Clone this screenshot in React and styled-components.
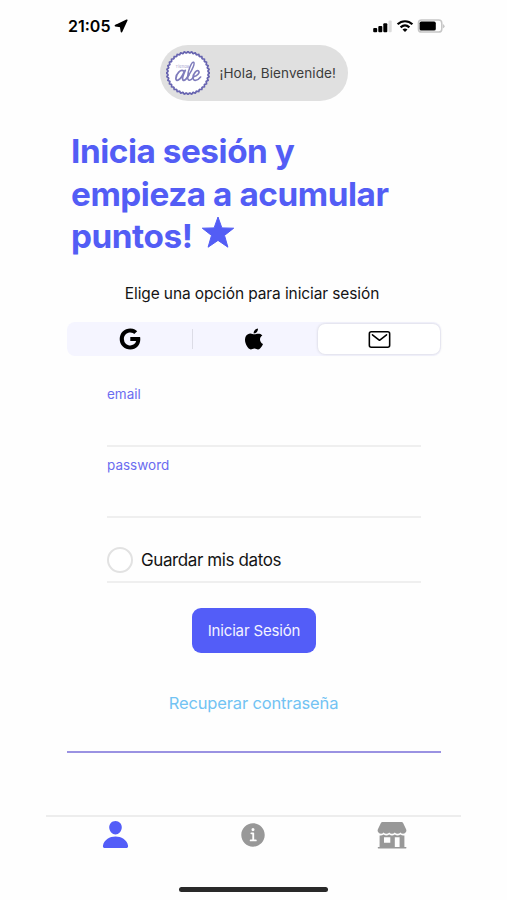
import { useState } from "react";
import styled, { createGlobalStyle } from "styled-components";
import {
  IoInformationCircle,
  IoLogoApple,
  IoLogoGoogle,
  IoMailOutline,
  IoPerson,
} from "react-icons/io5";

const methods = [
  { id: "google", icon: <IoLogoGoogle size={24} /> },
  { id: "apple", icon: <IoLogoApple size={24} /> },
  { id: "email", icon: <IoMailOutline size={25} /> },
];

// onda alrededor del sello del logo
const sealPath = () => {
  const points = [];
  for (let i = 0; i <= 360; i += 2) {
    const a = (i * Math.PI) / 180;
    const r = 20.7 + 0.7 * Math.cos(a * 36);
    points.push(
      `${(22 + r * Math.cos(a)).toFixed(2)} ${(22 + r * Math.sin(a)).toFixed(2)}`
    );
  }
  return `M${points.join("L")}Z`;
};

function Logo() {
  return (
    <svg width="44" height="44" viewBox="0 0 44 44">
      <path d={sealPath()} fill="#fff" stroke="#6764b0" strokeWidth="1.7" />
      <g fill="none" stroke="#7f7cbc" strokeLinecap="round" strokeLinejoin="round">
        <path
          strokeWidth="1.8"
          d="M17.8 20C14.6 17.8 10.2 22.6 9.9 27.2C9.8 31.4 14.6 29.4 18.2 20.8M19.2 19.4C17.4 23.4 15.8 28.2 17.2 29.2C18.6 30 21.2 27 22.8 24"
        />
        <path
          strokeWidth="1.5"
          d="M22.8 24C26.4 19 29.2 12.2 27.6 11.2C25.6 10.4 21.8 20 21.6 26C21.6 30.8 25 29.6 27.4 26.2"
        />
        <path
          strokeWidth="1.6"
          d="M27.6 25.8C31.2 25 34.2 21.6 32.6 20C30.6 18.6 27 22.8 27 26.8C27.2 31 31.8 29.6 34.6 26"
        />
      </g>
      <text x="9.5" y="16.5" fontSize="4" fill="#a3a0cc" fontFamily="Inter, sans-serif">
        Tienda
      </text>
    </svg>
  );
}

function StatusIcons() {
  return (
    <svg width="72" height="14" viewBox="0 0 72 14">
      <rect x="0.2" y="9" width="4" height="4.3" rx="1" />
      <rect x="5.3" y="7" width="4" height="6.3" rx="1" />
      <rect x="10.3" y="4.3" width="4" height="9" rx="1" />
      <rect x="15.5" y="1.5" width="3.2" height="11.8" rx="1" fill="#dcdcdc" />
      <g fill="none" stroke="#000" strokeWidth="2.2">
        <path d="M24.6 5.3C28.8 1.2 35.2 1.2 39.4 5.3" />
        <path d="M27.6 8.4C30.3 5.9 33.7 5.9 36.4 8.4" />
      </g>
      <path d="M32 13L29.5 10.5Q32 8.5 34.5 10.5Z" />
      <rect x="45.4" y="1.1" width="23.4" height="12" rx="3.2" fill="#fff" stroke="#c6c6c6" strokeWidth="1.5" />
      <path d="M69.8 5v4.4q1.8-.8 1.8-2.2t-1.8-2.2z" fill="#c6c6c6" />
      <rect x="46.6" y="2.6" width="16.2" height="9" rx="1.7" />
    </svg>
  );
}

function StoreIcon() {
  return (
    <svg width="30" height="28" viewBox="0 0 30 28" fill="currentColor">
      <path d="M5.4 1h19.2q1 0 1.5.9l3 6.3q.6 1.4 0 2.6-1 2-3 2-1.7 0-2.7-1.3-1 1.3-2.8 1.3T17.8 11.5Q16.7 12.8 15 12.8T12.2 11.5Q11.2 12.8 9.4 12.8T6.6 11.5Q5.6 12.8 3.9 12.8 1.9 12.8.9 10.8q-.6-1.2 0-2.6l3-6.3Q4.4 1 5.4 1z" />
      <path
        fillRule="evenodd"
        d="M2.6 14.4q2.2 .4 4-.8 2.8 1.7 5.6 0 2.8 1.7 5.6 0 2.8 1.7 5.6 0 1.8 1.2 4 .8V26h1.4q.7 0 .7 .8t-.7 .8H1.4q-.7 0-.7-.8t.7-.8H2.6zM7 16.2v5.6h6.3v-5.6zM17.8 16.2v9.8h4.8v-9.8z"
      />
    </svg>
  );
}

function App() {
  const [method, setMethod] = useState("email");
  const [remember, setRemember] = useState(false);

  return (
    <Screen>
      <GlobalStyle />
      <StatusBar>
        <Time>
          21:05
          <svg width="14" height="14" viewBox="0 0 14 14">
            <path
              d="M12.8 1.2L1.4 6.6 6.6 7.4 7.5 12.6Z"
              stroke="#000"
              strokeWidth="1.6"
              strokeLinejoin="round"
            />
          </svg>
        </Time>
        <StatusIcons />
      </StatusBar>

      <Welcome>
        <Logo />
        <span>¡Hola, Bienvenide!</span>
      </Welcome>

      <Title>
        Inicia sesión y<br />
        empieza a acumular
        <br />
        puntos!{" "}
        <Star width="34" height="33" viewBox="0 0 34 33">
          <path
            d="M17 1L20.9 11.9 32.7 12.2 23.5 19.4 26.9 31.2 17 24.4 7.1 31.2 10.5 19.4 1.3 12.2 13.1 11.9Z"
            fill="#535df5"
            stroke="#535df5"
            strokeLinejoin="round"
          />
        </Star>
      </Title>

      <Subtitle>Elige una opción para iniciar sesión</Subtitle>

      <Segment>
        {methods.map((item) => (
          <SegmentButton
            key={item.id}
            $active={method === item.id}
            $divider={item.id === "apple"}
            onClick={() => setMethod(item.id)}
          >
            {item.icon}
          </SegmentButton>
        ))}
      </Segment>

      <Form onSubmit={(e) => e.preventDefault()}>
        <Field>
          <Label>email</Label>
          <Input type="email" />
        </Field>
        <Field>
          <Label>password</Label>
          <Input type="password" />
        </Field>
        <Remember>
          <Check
            type="checkbox"
            checked={remember}
            onChange={() => setRemember(!remember)}
          />
          <span>Guardar mis datos</span>
        </Remember>
        <Submit>Iniciar Sesión</Submit>
      </Form>

      <Recover href="#">Recuperar contraseña</Recover>
      <Divider />

      <TabBar>
        <Tab $active>
          <IoPerson size={31} />
        </Tab>
        <Tab>
          <IoInformationCircle size={30} />
        </Tab>
        <Tab>
          <StoreIcon />
        </Tab>
      </TabBar>
      <HomeIndicator />
    </Screen>
  );
}

const GlobalStyle = createGlobalStyle`
  * {
    box-sizing: border-box;
  }

  body {
    margin: 0;
    background: #fefefe;
    font-family: Inter, "Liberation Sans", sans-serif;
    color: #141414;
  }

  button,
  input {
    font-family: inherit;
  }

  svg {
    flex-shrink: 0;
  }
`;

const Screen = styled.main`
  display: flex;
  flex-direction: column;
  width: 415px;
  height: 900px;
  margin-left: 46px;
`;

const StatusBar = styled.header`
  display: flex;
  align-items: center;
  justify-content: space-between;
  height: 45px;
  padding: 7px 16px 0 22px;
`;

const Time = styled.div`
  display: flex;
  align-items: center;
  gap: 4px;
  color: #000;
  font-size: 16px;
  font-weight: 600;
`;

const Welcome = styled.div`
  display: flex;
  align-items: center;
  align-self: center;
  gap: 10px;
  width: 188px;
  height: 56px;
  padding-left: 6px;
  border-radius: 28px;
  background: #e0e0e0;
  color: #3c3c3c;
  font-size: 13.5px;
  letter-spacing: 0.1px;
  white-space: nowrap;
`;

const Title = styled.h1`
  height: 129px;
  margin: 29px 0 0 25px;
  color: #535df5;
  font-size: 33.3px;
  font-weight: 650;
  letter-spacing: -0.45px;
  line-height: 42.7px;
  white-space: nowrap;
`;

const Star = styled.svg`
  margin-left: 1px;
  vertical-align: -1px;
`;

const Subtitle = styled.p`
  margin: 25px 0 0;
  padding-right: 3px;
  font-size: 15.5px;
  letter-spacing: -0.11px;
  line-height: 20px;
  text-align: center;
`;

const Segment = styled.div`
  display: grid;
  grid-template-columns: 1fr 1fr 1fr;
  height: 34px;
  margin: 18px 20px 0 21px;
  padding: 2px 1px;
  border-radius: 8px;
  background: #f5f5ff;
`;

const SegmentButton = styled.button`
  display: flex;
  align-items: center;
  justify-content: center;
  margin-left: ${({ $active }) => ($active ? "2px" : "0")};
  padding: 0;
  border: 0;
  border-radius: 7px;
  background: ${({ $active }) => ($active ? "#fff" : "transparent")};
  box-shadow: ${({ $active }) => ($active ? "0 0 3px rgba(0, 0, 0, 0.17)" : "none")};
  color: #000;

  &::before {
    content: "";
    width: 1px;
    height: 20px;
    margin-right: auto;
    background: ${({ $divider }) => ($divider ? "#dcdce6" : "transparent")};
  }

  &::after {
    content: "";
    width: 1px;
    margin-left: auto;
  }
`;

const Form = styled.form`
  display: flex;
  flex-direction: column;
  margin: 28px 40px 0 61px;
`;

const Field = styled.label`
  display: flex;
  flex-direction: column;
  height: 71px;
  padding-top: 1px;
`;

const Label = styled.span`
  color: #6b6cf0;
  font-size: 13.5px;
  line-height: 18px;
`;

const Input = styled.input`
  height: 44px;
  padding: 0;
  border: 0;
  border-bottom: 2px solid #efefef;
  outline: 0;
  background: transparent;
  font-size: 16px;
`;

const Remember = styled.label`
  display: flex;
  align-items: center;
  gap: 8px;
  height: 57px;
  padding-top: 12px;
  border-bottom: 2px solid #efefef;
  font-size: 17px;
  letter-spacing: -0.4px;
`;

const Check = styled.input`
  appearance: none;
  width: 26px;
  height: 26px;
  margin: 0;
  border: 2px solid #e2e2e2;
  border-radius: 50%;
  background: #fff;

  &:checked {
    border: 7px solid #535df5;
  }
`;

const Submit = styled.button`
  align-self: center;
  width: 124px;
  height: 45px;
  margin: 25px 20px 0 0;
  padding: 0;
  border: 0;
  border-radius: 9px;
  background: #535df8;
  color: #f3f3ff;
  font-size: 15px;
  letter-spacing: -0.15px;
  white-space: nowrap;
`;

const Recover = styled.a`
  align-self: center;
  margin-top: 39px;
  color: #72c3f3;
  font-size: 16.5px;
  letter-spacing: -0.15px;
  line-height: 22px;
  text-decoration: none;
`;

const Divider = styled.hr`
  width: 374px;
  height: 2px;
  margin: 37px 0 0 21px;
  border: 0;
  background: #9a92e2;
`;

const TabBar = styled.nav`
  display: grid;
  grid-template-columns: 1fr 1fr 1fr;
  height: 42px;
  margin-top: 62px;
  padding-bottom: 5px;
  border-top: 2px solid #ededed;
`;

const Tab = styled.div`
  display: flex;
  align-items: center;
  justify-content: center;
  color: ${({ $active }) => ($active ? "#535df8" : "#989898")};
`;

const HomeIndicator = styled.div`
  align-self: center;
  width: 149px;
  height: 5px;
  margin-top: 30px;
  border-radius: 3px;
  background: #292929;
`;

export default App;
